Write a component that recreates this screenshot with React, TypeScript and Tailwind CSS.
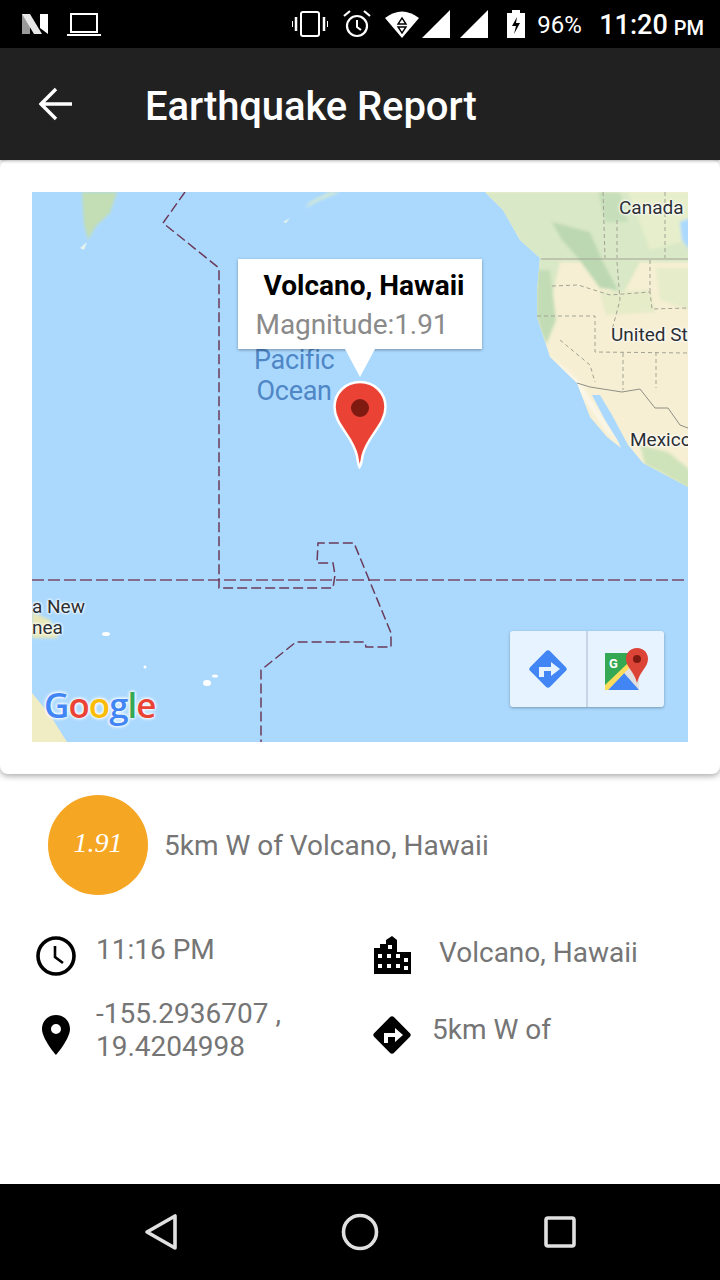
const FONT = "font-['Roboto','Noto_Sans',sans-serif]";

function StatusBar() {
  return (
    <div className="h-[48px] bg-black flex items-center shrink-0 text-white">
      <svg className="ml-[21px]" width="30" height="24" viewBox="0 0 30 24">
        <path d="M1 2h8v20H1z" fill="#9a9a9a" />
        <path d="M1 2h8l12 20h-8z" fill="#e8e8e8" />
        <path d="M19 2h8v20l-8-6z" fill="#ffffff" />
      </svg>
      <svg className="ml-[16px]" width="34" height="24" viewBox="0 0 34 24" fill="none" stroke="#fff" strokeWidth="2">
        <rect x="4" y="2" width="26" height="18" />
        <path d="M0 23h34" />
      </svg>
      <div className="ml-auto flex items-center">
        <svg width="36" height="30" viewBox="0 0 36 30" fill="none" stroke="#fff" strokeWidth="2">
          <rect x="9" y="3" width="18" height="24" rx="2" />
          <path d="M4 8v14M32 8v14" strokeWidth="2.5" />
          <path d="M0 12v6M36 12v6" strokeWidth="2" />
        </svg>
        <svg className="ml-[14px]" width="30" height="30" viewBox="0 0 30 30" fill="none" stroke="#fff" strokeWidth="2.2">
          <circle cx="15" cy="17" r="10" />
          <path d="M15 11v7l4 3" strokeWidth="2" />
          <path d="M2 7l6-5M28 7l-6-5" />
        </svg>
        <svg className="ml-[13px]" width="34" height="28" viewBox="0 0 34 28">
          <path d="M0 8Q17-5 34 8L17 28z" fill="#fff" />
          <path d="M17 8l4 6h-8zM17 23l4-6h-8z" fill="none" stroke="#000" strokeWidth="1.4" />
        </svg>
        <svg className="ml-[3px]" width="28" height="28" viewBox="0 0 28 28">
          <path d="M0 28L28 0v28z" fill="#fff" />
        </svg>
        <svg className="ml-[10px]" width="28" height="28" viewBox="0 0 28 28">
          <path d="M0 28L28 0v28z" fill="#fff" />
        </svg>
        <svg className="ml-[19px]" width="18" height="28" viewBox="0 0 18 28">
          <path d="M5 0h8v3h5v25H0V3h5z" fill="#fff" />
          <path d="M10 7l-5 9h4l-2 8 6-11H9z" fill="#000" />
        </svg>
        <span className="ml-[12px] text-[24px] leading-none w-[44px] mt-[2px]">96%</span>
        <span className="ml-[18px] text-[27px] font-medium leading-none mt-[3px]">11:20</span>
        <span className="ml-[6px] mr-[16px] text-[20px] font-medium leading-none mt-[7px]">PM</span>
      </div>
    </div>
  );
}

function MapArt() {
  const dash = "#7b4a68";
  return (
    <svg className="block w-[656px] h-[550px]" viewBox="32 192 656 550">
      <defs>
        <filter id="soft">
          <feGaussianBlur stdDeviation="1.6" />
        </filter>
        <clipPath id="land">
          <path d="M485 192L503 210L520 240L540 258L537 290L537 317L550 357L577 383L590 417L607 437L621 448L618 441L605 420L592 395L600 395L612 415L628 445L643 463L688 487L688 192Z" />
        </clipPath>
      </defs>
      <rect x="32" y="192" width="656" height="550" fill="#abd9fe" />
      {/* kamchatka and aleutians */}
      <path d="M82 192L117 192L110 213L96 226L88 240L84 224Z" fill="#c3deb4" filter="url(#soft)" />
      <path d="M84 250L80 248L87 242Z" fill="#e6f3ee" />
      <path d="M305 208L320 200L340 192L330 192L310 202Z" fill="#d8ead0" filter="url(#soft)" />
      <path d="M283 222L290 218L286 223Z" fill="#e6f3ee" />
      {/* north america */}
      <g clipPath="url(#land)">
        <rect x="480" y="192" width="210" height="300" fill="#f6efd3" />
        <g filter="url(#soft)">
          <path d="M480 192H690V262H640L620 300L590 262L560 262L540 350L520 300V240Z" fill="#d9e8c6" />
          <path d="M552 222L590 232L603 262L618 290L600 288L578 258L562 240Z" fill="#bcd8b2" />
          <path d="M598 192L620 192L628 222L605 222Z" fill="#c6dfba" />
          <path d="M537 270L550 270L556 320L546 345L537 317Z" fill="#c2dcb6" />
          <path d="M600 292L650 290L655 312L606 315Z" fill="#e6ebc8" />
          <path d="M656 268L690 268L690 310L660 300Z" fill="#e6ecc9" />
          <path d="M645 465L660 472L690 490V470L668 452L640 445Z" fill="#cfe3ba" />
          <path d="M628 192L690 192L690 240L650 250Z" fill="#e6eecb" />
          <path d="M680 222L690 218L690 250L682 240Z" fill="#abd9fe" />
          <path d="M550 355L580 382L620 445L605 430L578 390Z" fill="#fbf6e8" />
        </g>
      </g>
      {/* state and country borders */}
      <g fill="none" stroke="#a3a394" strokeWidth="1" strokeDasharray="4 3">
        <path d="M541 259L688 259" strokeDasharray="none" />
        <path d="M552 286L578 285L610 295L650 292L652 309L688 308" />
        <path d="M537 316L595 316L595 352L688 353" />
        <path d="M560 340L590 365L595 382" />
        <path d="M617 262L620 300L612 330M650 260L650 292M603 192L605 258M617 220L617 258M665 192L665 258" />
        <path d="M623 353L623 390M656 352L656 388" />
      </g>
      <path d="M577 383L590 387L622 392L640 389L655 408L668 408L680 425L688 428" fill="none" stroke="#8f8f84" strokeWidth="1" />
      {/* date line and equator */}
      <path d="M32 580H688" fill="none" stroke={dash} strokeWidth="1.6" strokeDasharray="12 4" />
      <path
        d="M185 192L163 223L219 268L219 588L333 588L335 575L333 563L317 563L318 543L354 543L391 633L391 647L366 647L365 642L296 642L261 670L261 742"
        fill="none"
        stroke="#6b3a58"
        strokeWidth="1.5"
        strokeDasharray="10 4"
      />
      {/* islands */}
      <g fill="#ffffff">
        <ellipse cx="106" cy="634" rx="4" ry="2" />
        <ellipse cx="145" cy="667" rx="1.5" ry="1.5" />
        <ellipse cx="207" cy="683" rx="4" ry="3" />
        <ellipse cx="215" cy="676" rx="3" ry="1.5" />
      </g>
      <path d="M32 693L50 715L67 742L32 742Z" fill="#f0ecc4" />
      <path d="M32 612L50 620L58 638L32 638Z" fill="#e8e8b8" filter="url(#soft)" />
    </svg>
  );
}

function MapLabel({ text, className }: { text: string; className: string }) {
  return (
    <span className={`absolute whitespace-nowrap leading-none text-[#2b2f33] [text-shadow:0_0_3px_#fff,0_0_3px_#fff,0_0_3px_#fff] ${className}`}>
      {text}
    </span>
  );
}

function MapPanel() {
  return (
    <div className="relative w-[656px] h-[550px] overflow-hidden">
      <MapArt />

      <MapLabel text="Canada" className="left-[587px] top-[6px] text-[19px]" />
      <MapLabel text="United States" className="left-[579px] top-[133px] text-[19px]" />
      <MapLabel text="Mexico" className="left-[598px] top-[238px] text-[19px]" />
      <MapLabel text="a New" className="left-[0px] top-[405px] text-[19px]" />
      <MapLabel text="nea" className="left-[0px] top-[426px] text-[19px]" />

      <span className="absolute left-[222px] top-[153px] text-[27px] leading-[31px] tracking-[-0.3px] text-[#4f86c6] text-center">
        Pacific
        <br />
        Ocean
      </span>

      {/* info window */}
      <div className="absolute left-[206px] top-[67px] w-[244px] h-[90px] bg-white shadow-[0_1px_3px_rgba(0,0,0,0.35)] flex flex-col items-center pt-[10px]">
        <span className="text-[28px] leading-[34px] font-bold text-black pl-[8px]">Volcano, Hawaii</span>
        <span className="text-[28px] leading-[36px] mt-[4px] tracking-[-0.1px] text-[#8a8a8a] mr-[16px]">Magnitude:1.91</span>
      </div>
      <svg className="absolute left-[312px] top-[157px]" width="32" height="30" viewBox="0 0 32 30">
        <path d="M1 0L16 28L31 0Z" fill="#fff" />
      </svg>

      {/* marker */}
      <svg className="absolute left-[300px] top-[188px]" width="56" height="90" viewBox="0 0 56 90">
        <path
          d="M28 2C13.5 2 2.5 13 2.5 27C2.5 45 21 56 25 76C25.8 81 26.2 85 27.5 87C29 85 29.8 81 30.5 76C35 56 53.5 45 53.5 27C53.5 13 42.5 2 28 2Z"
          fill="#ea4335"
          stroke="#fff"
          strokeWidth="2.5"
        />
        <circle cx="28" cy="28" r="9" fill="#7e1a10" />
      </svg>

      {/* google logo */}
      <span className="absolute left-[12px] top-[495px] font-['Open_Sans',sans-serif] font-semibold text-[35px] leading-none tracking-[-1px] [text-shadow:0_0_3px_#fff,0_0_3px_#fff,0_0_4px_#fff]">
        <span className="text-[#4285f4]">G</span>
        <span className="text-[#ea4335]">o</span>
        <span className="text-[#fbbc05]">o</span>
        <span className="text-[#4285f4]">g</span>
        <span className="text-[#34a853]">l</span>
        <span className="text-[#ea4335]">e</span>
      </span>

      {/* map toolbar */}
      <div className="absolute left-[478px] top-[439px] w-[154px] h-[76px] flex rounded-[3px] bg-[#e7f3ff] shadow-[0_1px_3px_rgba(0,0,0,0.3)]">
        <div className="w-[78px] flex items-center justify-center border-r-2 border-[#c5d5e6]">
          <svg width="42" height="42" viewBox="0 0 42 42">
            <rect x="7" y="7" width="28" height="28" rx="3" transform="rotate(45 21 21)" fill="#4285f4" />
            <path d="M13 30V20h12v-5l9 7-9 7v-5h-7v6z" transform="translate(-1 -1)" fill="#e7f3ff" />
          </svg>
        </div>
        <div className="flex-1 flex items-center justify-center">
          <svg width="44" height="42" viewBox="0 0 44 42">
            <rect x="1" y="5" width="34" height="37" fill="#34a853" />
            <path d="M1 42L24 17L35 27V42Z" fill="#e0e0e0" />
            <path d="M4 42L35 42L20 25Z" fill="#4285f4" />
            <path d="M1 37L24 15L27 18L4 42H1Z" fill="#fbdc5c" />
            <text x="5" y="20" fontSize="13" fontWeight="700" fill="#fff">G</text>
            <path d="M33 0C26 0 22 5 22 11C22 19 30 23 33 35C36 23 44 19 44 11C44 5 40 0 33 0Z" fill="#db4437" />
            <circle cx="33" cy="11" r="4" fill="#7e1a10" />
          </svg>
        </div>
      </div>
    </div>
  );
}

function Clock() {
  return (
    <svg width="40" height="40" viewBox="0 0 40 40" fill="none" stroke="#000">
      <circle cx="20" cy="20" r="18" strokeWidth="3.6" />
      <path d="M19 10v11l8 6" strokeWidth="2.6" />
    </svg>
  );
}

function Building() {
  return (
    <svg width="38" height="38" viewBox="0 0 38 38">
      <path
        fillRule="evenodd"
        d="M0 38V12H6V8H12V4L18 0L23 4V16H37V38ZM4 18v4h4v-4ZM13 18v4h4v-4ZM22 18v4h4v-4ZM30 22v4h4v-4ZM4 28v4h4v-4ZM13 28v4h4v-4ZM22 28v4h4v-4ZM30 30v4h4v-4ZM14 9v4h4V9Z"
        fill="#000"
      />
    </svg>
  );
}

function Pin() {
  return (
    <svg width="28" height="40" viewBox="0 0 28 40">
      <path fillRule="evenodd" d="M14 0C6 0 0 6 0 14C0 24 14 40 14 40S28 24 28 14C28 6 22 0 14 0ZM14 9a5 5 0 1 1 0 10a5 5 0 0 1 0-10Z" fill="#000" />
    </svg>
  );
}

function Turn() {
  return (
    <svg width="40" height="40" viewBox="0 0 40 40">
      <rect x="6" y="6" width="28" height="28" rx="3" transform="rotate(45 20 20)" fill="#000" />
      <path d="M12 28V18h11v-5l8 7-8 7v-5h-7v6z" fill="#fff" />
    </svg>
  );
}

export default function App() {
  return (
    <div className={`w-[720px] h-[1280px] flex flex-col bg-white overflow-hidden ${FONT}`}>
      <StatusBar />

      <div className="h-[112px] bg-[#212121] flex items-center shrink-0 text-white relative z-10 shadow-[0_1px_3px_rgba(0,0,0,0.3)]">
        <svg className="ml-[39px]" width="34" height="34" viewBox="0 0 34 34" fill="none" stroke="#fff" strokeWidth="3.4">
          <path d="M33 17H3M17 2L2 17L17 32" />
        </svg>
        <span className="ml-[72px] text-[40px] font-medium leading-none tracking-[-0.1px] mt-[5px]">Earthquake Report</span>
      </div>

      <div className="h-[614px] shrink-0 p-[32px] bg-white rounded-[8px] shadow-[0_2px_6px_rgba(0,0,0,0.35)]">
        <MapPanel />
      </div>

      <div className="flex-1 text-[#757575] text-[28px]">
        <div className="flex items-center pl-[48px] pt-[24px]">
          <div className="w-[100px] h-[100px] rounded-full bg-[#f5a623] flex items-center justify-center font-['Liberation_Serif',serif] italic text-white text-[28px] leading-none -mt-[3px] pb-[4px]">
            1.91
          </div>
          <span className="ml-[16px] leading-none -mt-[1px]">5km W of Volcano, Hawaii</span>
        </div>

        <div className="grid grid-cols-[336px_1fr] pl-[36px] pt-[41px]">
          <div className="flex h-[75px]">
            <div className="w-[40px] shrink-0">
              <Clock />
            </div>
            <span className="ml-[20px] leading-none">11:16 PM</span>
          </div>
          <div className="flex h-[75px]">
            <div className="w-[38px] ml-[2px] shrink-0">
              <Building />
            </div>
            <span className="ml-[27px] leading-none mt-[3px]">Volcano, Hawaii</span>
          </div>
          <div className="flex items-start">
            <div className="w-[28px] ml-[6px] mt-[4px] shrink-0">
              <Pin />
            </div>
            <span className="ml-[26px] leading-[33px] -mt-[14px]">
              -155.2936707 ,
              <br />
              19.4204998
            </span>
          </div>
          <div className="flex items-start">
            <div className="w-[40px] mt-[4px] shrink-0">
              <Turn />
            </div>
            <span className="ml-[20px] leading-none mt-[5px]">5km W of</span>
          </div>
        </div>
      </div>

      <div className="h-[96px] bg-black shrink-0 flex items-center justify-center gap-[160px]">
        <svg width="40" height="40" viewBox="0 0 40 40" fill="none" stroke="#e0e0e0" strokeWidth="3.6">
          <path d="M35 4V36L7 20Z" strokeLinejoin="round" />
        </svg>
        <svg width="40" height="40" viewBox="0 0 40 40" fill="none" stroke="#e0e0e0" strokeWidth="3.6">
          <circle cx="20" cy="20" r="16.5" />
        </svg>
        <svg width="40" height="40" viewBox="0 0 40 40" fill="none" stroke="#e0e0e0" strokeWidth="3.6">
          <rect x="6" y="6" width="28" height="28" rx="2" />
        </svg>
      </div>
    </div>
  );
}
